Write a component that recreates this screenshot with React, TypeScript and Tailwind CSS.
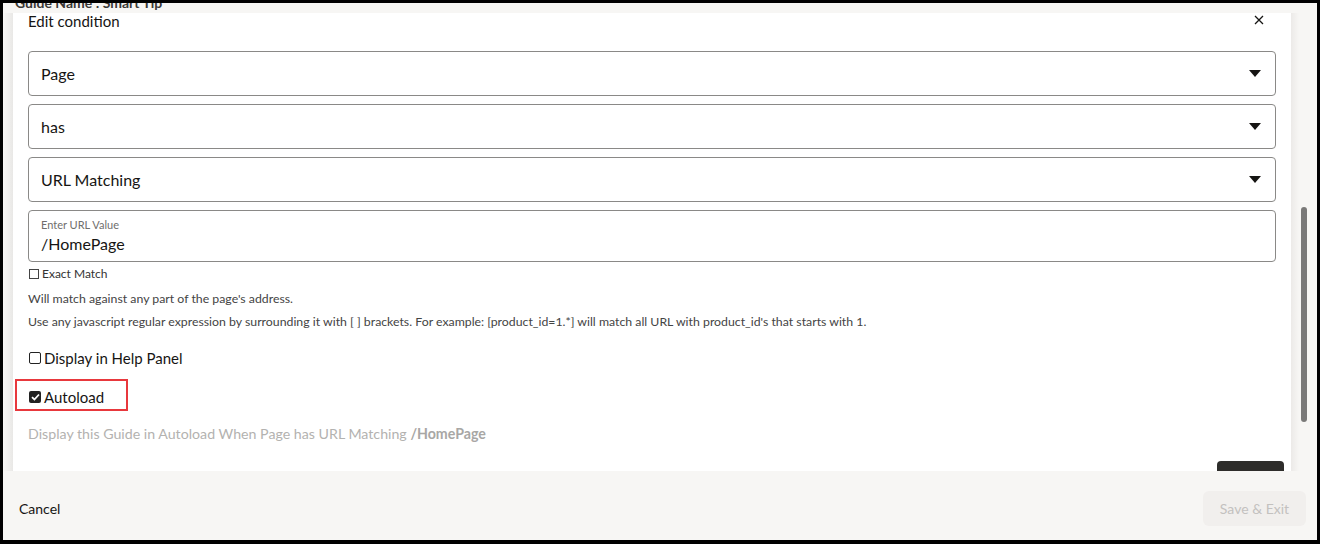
import React from "react";

function Caret() {
  return (
    <svg width="12" height="7" viewBox="0 0 12 7" className="shrink-0">
      <path d="M0 0 L12 0 L6 7 Z" fill="#161513" />
    </svg>
  );
}

function Select({ label }: { label: string }) {
  return (
    <div className="flex h-[45px] items-center justify-between rounded-[4px] border border-[#8a8987] bg-white pl-[12px] pr-[14px]">
      <span className="text-[16px] text-[#161513]">{label}</span>
      <Caret />
    </div>
  );
}

export default function App() {
  return (
    <div
      className="h-[544px] w-[1320px] overflow-hidden bg-black p-[3px] pb-[4px]"
      style={{ fontFamily: 'Lato, "Noto Sans", sans-serif' }}
    >
      <div className="relative flex h-full w-full flex-col overflow-hidden bg-[#f7f6f4]">
        <div className="absolute left-[12px] top-[-11px] text-[14px] font-bold text-[#3a3836]">
          Guide Name : Smart Tip
        </div>
        <div className="mt-[10px] flex h-[458px] shrink-0">
          <div className="w-[10px] shrink-0 bg-gradient-to-r from-[#f7f6f4] to-[#e9e8e6]" />
          <div className="relative flex-1 overflow-hidden bg-white pl-[15px] pr-[15px]">
            <div className="flex h-[38px] items-start justify-between pr-[12px]">
              <span className="text-[15px] leading-[17px] text-[#161513]">Edit condition</span>
              <svg width="10" height="10" viewBox="0 0 10 10" className="mt-[2px]">
                <path d="M1 1 L9 9 M9 1 L1 9" stroke="#161513" strokeWidth="1.3" />
              </svg>
            </div>
            <div className="flex flex-col gap-[8px]">
              <Select label="Page" />
              <Select label="has" />
              <Select label="URL Matching" />
              <div className="flex h-[52px] flex-col justify-center rounded-[4px] border border-[#8a8987] bg-white pl-[12px]">
                <span className="text-[11px] leading-[14px] text-[#6f6e6c]">Enter URL Value</span>
                <span className="mt-[1px] text-[16px] leading-[22px] text-[#161513]">/HomePage</span>
              </div>
            </div>
            <div className="mt-[3px] flex items-center gap-[3px] pl-[1px] text-[12px] text-[#333]">
              <span className="inline-block h-[10px] w-[10px] border border-[#444]" />
              <span>Exact Match</span>
            </div>
            <div className="mt-[8px] text-[12.3px] leading-[16px] text-[#444]">
              Will match against any part of the page's address.
            </div>
            <div className="mt-[7px] text-[12.3px] leading-[16px] text-[#444]">
              Use any javascript regular expression by surrounding it with [ ] brackets. For example: [product_id=1.*] will match all URL with product_id's that starts with 1.
            </div>
            <div className="mt-[17px] flex items-center gap-[3px] pl-[1px] text-[15px] text-[#161513]">
              <span className="inline-block h-[12px] w-[12px] rounded-[2px] border-[1.5px] border-[#222]" />
              <span>Display in Help Panel</span>
            </div>
            <div className="relative mt-[16px] flex items-center gap-[3px] pl-[1px] text-[15px] text-[#161513]">
              <div className="absolute left-[-13px] top-[-7px] h-[32px] w-[113px] border-2 border-[#e8383d]" />
              <span className="flex h-[12px] w-[12px] items-center justify-center rounded-[2px] bg-[#222]">
                <svg width="9" height="8" viewBox="0 0 9 8">
                  <path d="M1 4.2 L3.4 6.5 L8 1.5" stroke="white" strokeWidth="1.8" fill="none" />
                </svg>
              </span>
              <span>Autoload</span>
            </div>
            <div className="mt-[15px] text-[14.2px] text-[#b3b2b0]">
              Display this Guide in Autoload When Page has URL Matching{" "}
              <span className="font-bold text-[#a8a7a5]">/HomePage</span>
            </div>
            <div className="absolute bottom-[-10px] right-[7px] h-[20px] w-[67px] rounded-[4px] bg-[#2e2d2b]" />
          </div>
          <div className="flex w-[26px] shrink-0">
            <div className="w-[8px] bg-gradient-to-r from-[#eceae8] to-[#f7f6f4]" />
            <div className="flex flex-1 flex-col pt-[194px] pl-[2px]">
              <div className="h-[215px] w-[6px] rounded-full bg-[#7a7978]" />
            </div>
          </div>
        </div>
        <div className="flex flex-1 items-center justify-between pl-[16px] pr-[11px] pt-[6px]">
          <span className="text-[14px] text-[#161513]">Cancel</span>
          <div className="flex h-[35px] w-[103px] items-center justify-center rounded-[6px] bg-[#f1efed] text-[14px] text-[#c3c1bf]">
            Save &amp; Exit
          </div>
        </div>
      </div>
    </div>
  );
}
